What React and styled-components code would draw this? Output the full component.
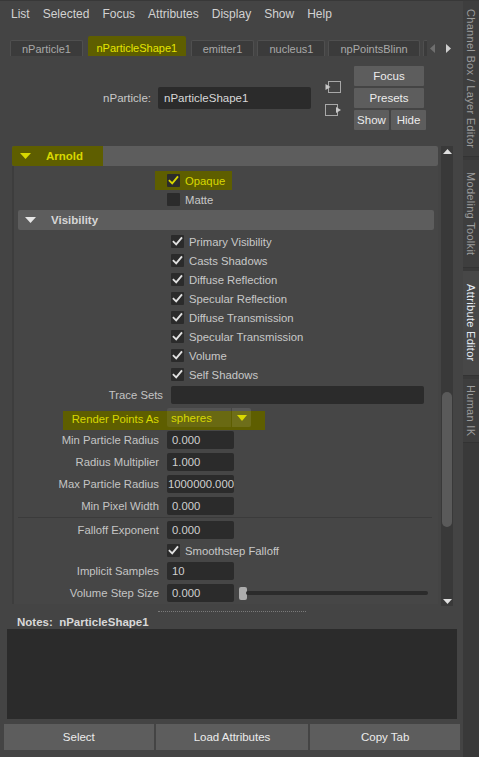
import React from 'react';
import styled, { createGlobalStyle, css } from 'styled-components';

const Global = createGlobalStyle`
  html, body { margin: 0; padding: 0; background: #444444; }
  body {
    font-family: "Liberation Sans", Arial, sans-serif;
    font-size: 11.3px;
    color: #c6c6c6;
  }
  *, *::before, *::after { box-sizing: border-box; }
`;

const OLIVE = '#5e5e00';
const YELLOW = '#d8d800';

const Window = styled.div`
  display: flex;
  width: 479px;
  height: 757px;
  overflow: hidden;
  background: #444444;
`;

const Main = styled.div`
  width: 463px;
  flex: none;
  display: flex;
  flex-direction: column;
  border-top: 1px solid #383838;
`;

const MenuBar = styled.div`
  height: 25px;
  display: flex;
  align-items: center;
  gap: 13px;
  padding-left: 11px;
  font-size: 12px;
  color: #d2d2d2;
`;

const TabRow = styled.div`
  height: 30px;
  display: flex;
  align-items: flex-end;
  padding-left: 10px;
`;

const TabStrip = styled.div`
  width: 417px;
  display: flex;
  align-items: flex-end;
  gap: 3px;
  overflow: hidden;
`;

const Tab = styled.div`
  flex: none;
  display: flex;
  align-items: center;
  font-size: 11px;
  white-space: nowrap;
  border-radius: 2px 2px 0 0;
  min-width: ${p => p.$minW || 0}px;
  ${p => p.$active ? css`
    height: 20px;
    padding: 4px 8.5px 0;
    margin: 0 2px;
    background: ${OLIVE};
    color: #e6e600;
  ` : css`
    height: 16px;
    padding: 0 11px;
    background: #3b3b3b;
    color: #a9a9a9;
    border: 1px solid #4f4f4f;
    border-bottom: none;
  `}
`;

const TabArrows = styled.div`
  height: 16px;
  display: flex;
  align-items: center;
  gap: 11px;
  margin-left: 3px;
`;

const Header = styled.div`
  display: flex;
  align-items: center;
  justify-content: flex-end;
  padding: 10px 37px 16px 0;
`;

const HeaderLabel = styled.span`
  font-size: 11.5px;
  color: #c8c8c8;
  margin-right: 7px;
`;

const NameField = styled.div`
  width: 153px;
  height: 22px;
  background: #2b2b2b;
  border-radius: 2px;
  padding-left: 6px;
  display: flex;
  align-items: center;
  font-size: 11.5px;
  color: #d8d8d8;
`;

const IconColumn = styled.div`
  display: flex;
  flex-direction: column;
  gap: 9px;
  margin-left: 14px;
`;

const ButtonColumn = styled.div`
  display: flex;
  flex-direction: column;
  gap: 2px;
  margin-left: 12px;
  width: 72px;
`;

const ButtonPair = styled.div`
  display: flex;
  gap: 2px;
`;

const Button = styled.div`
  width: ${p => p.$w}px;
  height: ${p => p.$h || 20}px;
  background: #5d5d5d;
  color: #ececec;
  font-size: 11.5px;
  display: flex;
  align-items: center;
  justify-content: center;
  border-radius: 1px;
`;

const ScrollArea = styled.div`
  height: 460px;
  display: flex;
  padding-left: 12px;
`;

const ScrollContent = styled.div`
  width: 426px;
  overflow: hidden;
  display: flex;
  flex-direction: column;
`;

const SectionHeader = styled.div`
  flex: none;
  height: 20px;
  display: flex;
  align-items: center;
  background: #5d5d5d;
  border-radius: 2px;
  font-weight: bold;
  font-size: 11.5px;
  color: #d6d6d6;
  overflow: hidden;
  margin: ${p => p.$m || 0};
`;

const HeaderHighlight = styled.div`
  height: 100%;
  width: ${p => p.$w}px;
  display: flex;
  align-items: center;
  background: ${OLIVE};
  color: ${YELLOW};
`;

const Arrow = styled.svg`
  flex: none;
  margin-left: ${p => p.$ml}px;
  margin-right: ${p => p.$mr}px;
`;

const FrameBody = styled.div`
  display: flex;
  flex-direction: column;
  border-left: 2px solid #3d3d3d;
  background: #464646;
  padding: ${p => p.$pad || '0'};
`;

const SubFrame = styled.div`
  display: flex;
  flex-direction: column;
  margin-bottom: ${p => p.$mb || 0}px;
`;

const Row = styled.div`
  flex: none;
  position: relative;
  display: grid;
  grid-template-columns: ${p => p.$lw}px 1fr;
  column-gap: 8px;
  align-items: ${p => p.$top ? 'start' : 'center'};
  height: ${p => p.$h}px;
  margin-top: ${p => p.$mt || 0}px;
  ${p => p.$hl && css`
    &::before {
      content: '';
      position: absolute;
      left: ${p.$hl[0]}px;
      width: ${p.$hl[1]}px;
      top: 3px;
      bottom: -1px;
      background: ${OLIVE};
    }
    & > * { position: relative; }
  `}
`;

const Label = styled.div`
  text-align: right;
  white-space: nowrap;
  color: ${p => p.$yellow ? YELLOW : '#c4c4c4'};
  ${p => p.$top && css`line-height: 22px;`}
`;

const CheckWrap = styled.div`
  display: inline-flex;
  align-items: center;
  gap: 5px;
  white-space: nowrap;
  height: 19px;
  color: ${p => p.$hl ? YELLOW : '#c8c8c8'};
  ${p => p.$hl && css`
    justify-self: start;
    margin-left: -12px;
    padding: 0 7px 0 12px;
    background: ${OLIVE};
  `}
`;

const Box = styled.div`
  width: 13px;
  height: 13px;
  flex: none;
  background: #2b2b2b;
  border-radius: 1px;
  display: flex;
  align-items: center;
  justify-content: center;
`;

const Field = styled.div`
  width: ${p => p.$w || 67}px;
  height: 18px;
  background: #2b2b2b;
  border-radius: 2px;
  padding-left: ${p => p.$pad ?? 5}px;
  display: flex;
  align-items: center;
  color: #cfcfcf;
  white-space: nowrap;
  overflow: hidden;
`;

const Dropdown = styled.div`
  display: flex;
  gap: 1px;
  height: 19px;
  width: 84px;
  color: ${YELLOW};
  font-size: 11.5px;
`;

const DropText = styled.div`
  flex: 1;
  display: flex;
  align-items: center;
  padding-left: 4px;
  background: rgba(255, 255, 255, 0.07);
  border-radius: 2px 0 0 2px;
`;

const DropButton = styled.div`
  width: 19px;
  display: flex;
  align-items: center;
  justify-content: center;
  background: rgba(255, 255, 255, 0.1);
  border-radius: 0 2px 2px 0;
`;

const Separator = styled.div`
  flex: none;
  height: 1px;
  margin: 0 2px 1px 0;
  background: #3b3b3b;
`;

const SliderCell = styled.div`
  display: flex;
  align-items: center;
  gap: 5px;
  padding-right: 6px;
`;

const Slider = styled.div`
  flex: 1;
  height: 13px;
  display: flex;
  align-items: center;
`;

const Thumb = styled.div`
  width: 8px;
  height: 13px;
  background: #acacac;
  border-radius: 2px;
  flex: none;
`;

const Track = styled.div`
  flex: 1;
  height: 4px;
  background: #2b2b2b;
  border-radius: 2px;
  margin-left: -1px;
`;

const Scrollbar = styled.div`
  width: 12px;
  margin-left: 3px;
  display: flex;
  flex-direction: column;
  background: #393939;
`;

const ScrollButton = styled.div`
  height: 10px;
  flex: none;
  display: flex;
  align-items: center;
  justify-content: center;
`;

const ScrollTrack = styled.div`
  flex: 1;
  display: flex;
  flex-direction: column;
  align-items: center;
`;

const ScrollThumb = styled.div`
  width: 10px;
  height: ${p => p.$h}px;
  margin-top: ${p => p.$top}px;
  background: #5a5a5a;
  border-radius: 5px;
`;

const DottedDivider = styled.div`
  width: 148px;
  height: 1px;
  margin: 5px auto 0;
  border-top: 1px dotted #7a7a7a;
`;

const NotesLabel = styled.div`
  height: 13px;
  margin-top: 4px;
  padding-left: 17px;
  font-weight: bold;
  font-size: 11.5px;
  line-height: 13px;
  color: #d8d8d8;
  white-space: pre;
`;

const NotesBox = styled.div`
  height: 90px;
  margin: 0 6px 0 7px;
  background: #2b2b2b;
`;

const BottomBar = styled.div`
  display: grid;
  grid-template-columns: 1fr 1.02fr 1fr;
  gap: 2px;
  margin: 5px 3px 0 4px;
`;

const BottomButton = styled.div`
  height: 26px;
  background: #5d5d5d;
  color: #ececec;
  font-size: 11.5px;
  display: flex;
  align-items: center;
  justify-content: center;
`;

const SideStrip = styled.div`
  width: 16px;
  flex: none;
  display: flex;
  flex-direction: column;
  gap: 3px;
  padding-top: 1px;
  background: #393939;
`;

const SideTab = styled.div`
  height: ${p => p.$h}px;
  flex: none;
  display: flex;
  align-items: center;
  justify-content: center;
  background: ${p => p.$active ? '#474747' : '#3e3e3e'};
  border-bottom: 1px solid #333;
  color: ${p => p.$active ? '#e6ecf4' : '#9c9c9c'};
`;

const SideText = styled.span`
  writing-mode: vertical-rl;
  font-size: 11px;
  line-height: 14px;
  letter-spacing: 0.3px;
  white-space: nowrap;
`;

const DownTri = ({ color = '#e0e0e0', w = 10, h = 6, ml = 0, mr = 0 }) => (
  <Arrow width={w} height={h} viewBox={`0 0 ${w} ${h}`} $ml={ml} $mr={mr}>
    <polygon points={`0,0 ${w},0 ${w / 2},${h}`} fill={color} />
  </Arrow>
);

const Check = ({ color = '#e2e2e2' }) => (
  <svg width="11" height="11" viewBox="0 0 11 11">
    <polyline points="1.6,5.8 4.2,8.4 9.4,2.2" fill="none" stroke={color} strokeWidth="1.9" strokeLinecap="square" />
  </svg>
);

const CheckBox = ({ checked, label, hl }) => (
  <CheckWrap $hl={hl}>
    <Box>{checked && <Check color={hl ? YELLOW : '#e2e2e2'} />}</Box>
    {label}
  </CheckWrap>
);

const tabs = ['nParticle1', 'nParticleShape1', 'emitter1', 'nucleus1', 'npPointsBlinn'];
const menus = ['List', 'Selected', 'Focus', 'Attributes', 'Display', 'Show', 'Help'];
const visibility = [
  'Primary Visibility', 'Casts Shadows', 'Diffuse Reflection', 'Specular Reflection',
  'Diffuse Transmission', 'Specular Transmission', 'Volume', 'Self Shadows',
];
const radiusRows = [
  ['Min Particle Radius', '0.000'],
  ['Radius Multiplier', '1.000'],
  ['Max Particle Radius', '1000000.000', 1],
  ['Min Pixel Width', '0.000'],
];
const sideTabs = [
  ['Channel Box / Layer Editor', 156],
  ['Modeling Toolkit', 108],
  ['Attribute Editor', 105, true],
  ['Human IK', 64],
];

export default function App() {
  return (
    <>
      <Global />
      <Window>
        <Main>
          <MenuBar>
            {menus.map(m => <span key={m}>{m}</span>)}
          </MenuBar>

          <TabRow>
            <TabStrip>
              {tabs.map(t => (
                <Tab key={t} $active={t === 'nParticleShape1'}>{t}</Tab>
              ))}
              <Tab $minW={60} />
            </TabStrip>
            <TabArrows>
              <svg width="5" height="9" viewBox="0 0 5 9"><polygon points="5,0 5,9 0,4.5" fill="#6f6f6f" /></svg>
              <svg width="5" height="9" viewBox="0 0 5 9"><polygon points="0,0 0,9 5,4.5" fill="#cfcfcf" /></svg>
            </TabArrows>
          </TabRow>

          <Header>
            <HeaderLabel>nParticle:</HeaderLabel>
            <NameField>nParticleShape1</NameField>
            <IconColumn>
              <svg width="17" height="14" viewBox="0 0 17 14">
                <rect x="3.5" y="1.5" width="12" height="11" fill="none" stroke="#a8a8a8" />
                <polygon points="0.5,4 5.5,7 0.5,10" fill="#c8c8c8" />
              </svg>
              <svg width="17" height="14" viewBox="0 0 17 14">
                <rect x="0.5" y="1.5" width="12" height="11" fill="none" stroke="#a8a8a8" />
                <polygon points="11,4 16,7 11,10" fill="#c8c8c8" />
              </svg>
            </IconColumn>
            <ButtonColumn>
              <Button $w={70}>Focus</Button>
              <Button $w={70}>Presets</Button>
              <ButtonPair>
                <Button $w={35}>Show</Button>
                <Button $w={35}>Hide</Button>
              </ButtonPair>
            </ButtonColumn>
          </Header>

          <ScrollArea>
            <ScrollContent>
              <SectionHeader>
                <HeaderHighlight $w={91}>
                  <DownTri color={YELLOW} w={11} h={6} ml={8} mr={15} />
                  Arnold
                </HeaderHighlight>
              </SectionHeader>

              <FrameBody $pad="5px 4px 0 4px">
                <Row $lw={141} $h={19}>
                  <span />
                  <CheckBox checked hl label="Opaque" />
                </Row>
                <Row $lw={141} $h={19}>
                  <span />
                  <CheckBox label="Matte" />
                </Row>

                <SubFrame $mb={3}>
                  <SectionHeader $m="1px 0 2px">
                    <DownTri color="#e6e6e6" w={11} h={6} ml={7} mr={15} />
                    Visibility
                  </SectionHeader>
                  {visibility.map(v => (
                    <Row key={v} $lw={145} $h={19}>
                      <span />
                      <CheckBox checked label={v} />
                    </Row>
                  ))}
                  <Row $lw={145} $h={20} $mt={1}>
                    <Label>Trace Sets</Label>
                    <Field $w={253} />
                  </Row>
                </SubFrame>

                <Row $lw={141} $h={21} $top $hl={[45, 202]}>
                  <Label $yellow $top>Render Points As</Label>
                  <Dropdown>
                    <DropText>spheres</DropText>
                    <DropButton><DownTri color={YELLOW} w={10} h={6} /></DropButton>
                  </Dropdown>
                </Row>

                {radiusRows.map(([l, v, tight]) => (
                  <Row key={l} $lw={141} $h={22}>
                    <Label>{l}</Label>
                    <Field $pad={tight ? 1 : 5}>{v}</Field>
                  </Row>
                ))}

                <Separator />

                <Row $lw={141} $h={22}>
                  <Label>Falloff Exponent</Label>
                  <Field>0.000</Field>
                </Row>
                <Row $lw={141} $h={19}>
                  <span />
                  <CheckBox checked label="Smoothstep Falloff" />
                </Row>
                <Row $lw={141} $h={22}>
                  <Label>Implicit Samples</Label>
                  <Field>10</Field>
                </Row>
                <Row $lw={141} $h={22}>
                  <Label>Volume Step Size</Label>
                  <SliderCell>
                    <Field>0.000</Field>
                    <Slider>
                      <Thumb />
                      <Track />
                    </Slider>
                  </SliderCell>
                </Row>
              </FrameBody>
            </ScrollContent>

            <Scrollbar>
              <ScrollButton>
                <svg width="9" height="5" viewBox="0 0 9 5"><polygon points="0,5 9,5 4.5,0" fill="#e0e0e0" /></svg>
              </ScrollButton>
              <ScrollTrack>
                <ScrollThumb $top={236} $h={135} />
              </ScrollTrack>
              <ScrollButton>
                <svg width="9" height="5" viewBox="0 0 9 5"><polygon points="0,0 9,0 4.5,5" fill="#e0e0e0" /></svg>
              </ScrollButton>
            </Scrollbar>
          </ScrollArea>

          <DottedDivider />
          <NotesLabel>{'Notes:  nParticleShape1'}</NotesLabel>
          <NotesBox />

          <BottomBar>
            <BottomButton>Select</BottomButton>
            <BottomButton>Load Attributes</BottomButton>
            <BottomButton>Copy Tab</BottomButton>
          </BottomBar>
        </Main>

        <SideStrip>
          {sideTabs.map(([t, h, a]) => (
            <SideTab key={t} $h={h} $active={a}>
              <SideText>{t}</SideText>
            </SideTab>
          ))}
        </SideStrip>
      </Window>
    </>
  );
}
